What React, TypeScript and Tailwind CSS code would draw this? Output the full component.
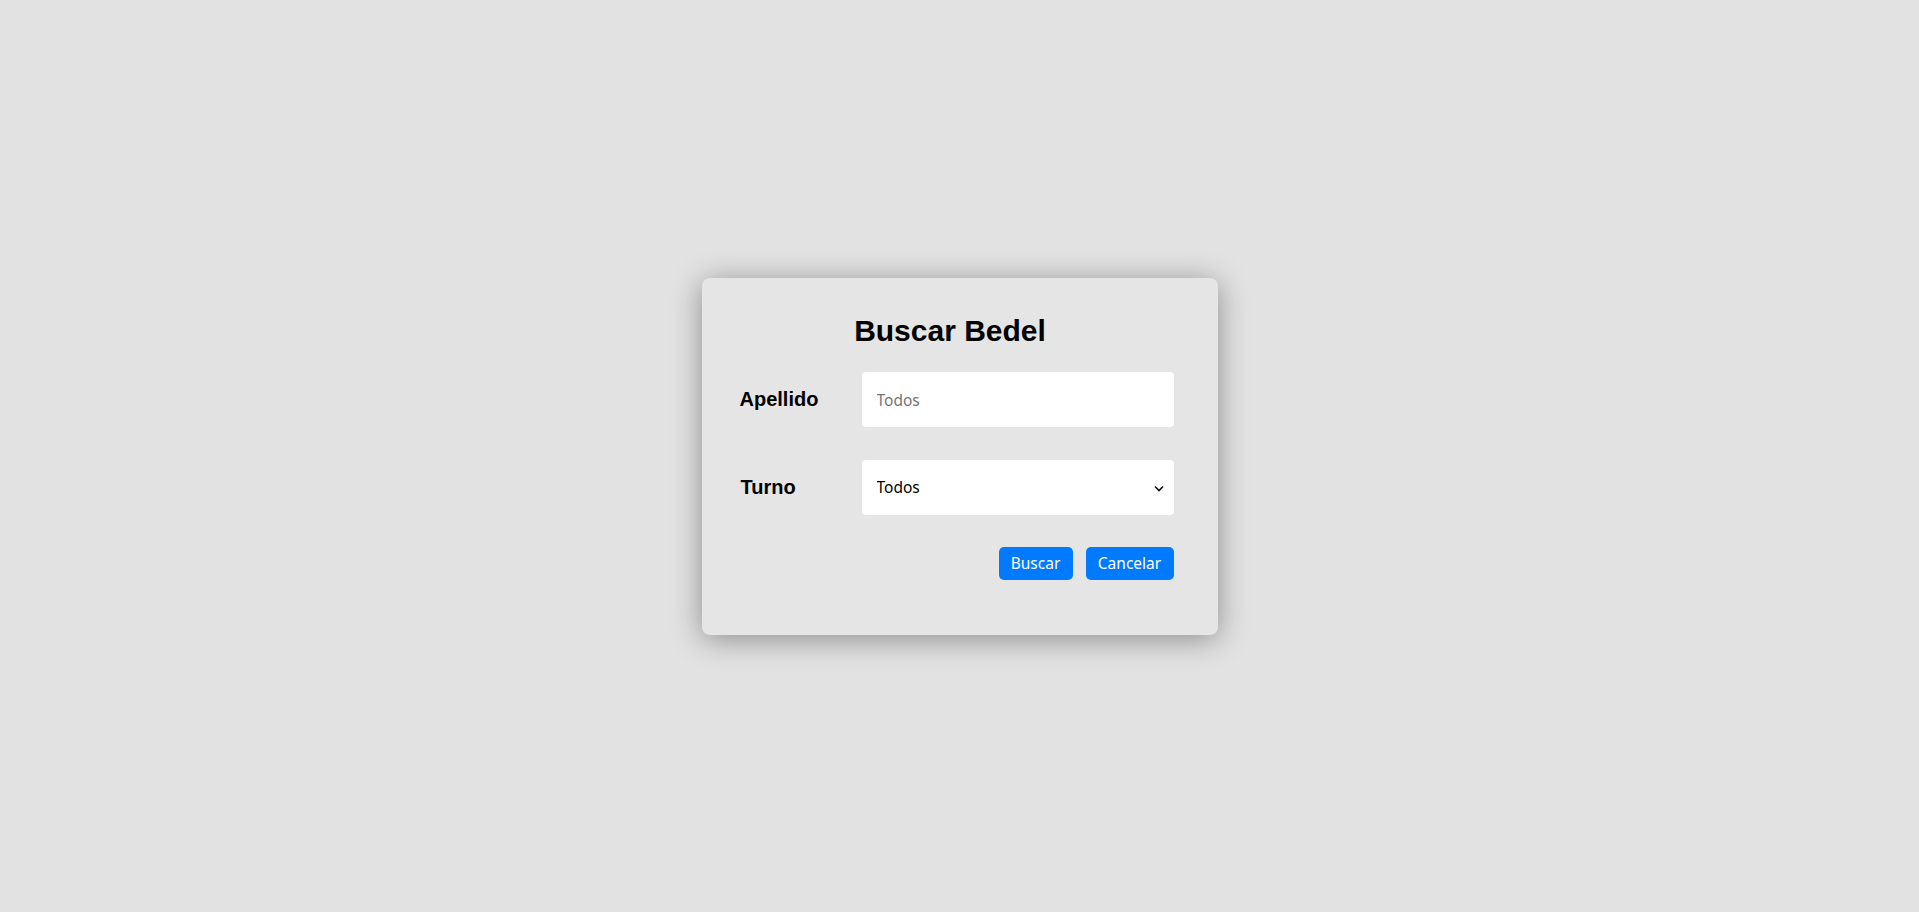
import React from "react";

export default function App() {
  return (
    <div className="min-h-screen w-full bg-[#e2e2e2] flex items-center justify-center">
      <div className="w-[516px] h-[357px] bg-[#e5e5e5] rounded-lg shadow-[0_4px_30px_rgba(0,0,0,0.38)] pt-[35px] pl-[38px] pr-[44px] pb-[55px] flex flex-col">
        <div className="pr-[13px] text-center">
          <h2 className="text-[30px] leading-[36px] font-bold text-black font-['Liberation_Sans',Arial,sans-serif]">
            Buscar Bedel
          </h2>
        </div>
        <div className="mt-[23px] flex items-center">
          <label className="w-[122px] text-[20px] font-bold text-black font-['Liberation_Sans',Arial,sans-serif]">
            Apellido
          </label>
          <input
            type="text"
            placeholder="Todos"
            className="w-[312px] h-[55px] bg-white rounded-[4px] pl-[15px] pt-[2px] text-[15.5px] text-black placeholder:text-[#757575] outline-none font-['Noto_Sans',sans-serif]"
          />
        </div>
        <div className="mt-[33px] flex items-center">
          <label className="w-[122px] text-[20px] font-bold text-black font-['Liberation_Sans',Arial,sans-serif] pl-[1px] -mt-[1px]">
            Turno
          </label>
          <div className="relative w-[312px] h-[55px]">
            <select className="appearance-none w-full h-full bg-white rounded-[4px] pl-[15px] pt-[2px] text-[15.5px] text-black outline-none font-['Noto_Sans',sans-serif]">
              <option>Todos</option>
              <option>Mañana</option>
              <option>Tarde</option>
              <option>Noche</option>
            </select>
            <svg
              className="absolute right-[10px] top-[25px] pointer-events-none"
              width="10"
              height="7"
              viewBox="0 0 10 7"
            >
              <path d="M1 1.5 L5 5.5 L9 1.5" fill="none" stroke="#111" strokeWidth="1.6" />
            </svg>
          </div>
        </div>
        <div className="mt-[32px] flex justify-end gap-[13px]">
          <button className="w-[74px] h-[33px] pt-[2px] rounded-[5px] bg-[#007bff] text-white text-[15.5px] font-['Noto_Sans',sans-serif]">
            Buscar
          </button>
          <button className="w-[88px] h-[33px] pt-[2px] rounded-[5px] bg-[#007bff] text-white text-[15.5px] font-['Noto_Sans',sans-serif]">
            Cancelar
          </button>
        </div>
      </div>
    </div>
  );
}
